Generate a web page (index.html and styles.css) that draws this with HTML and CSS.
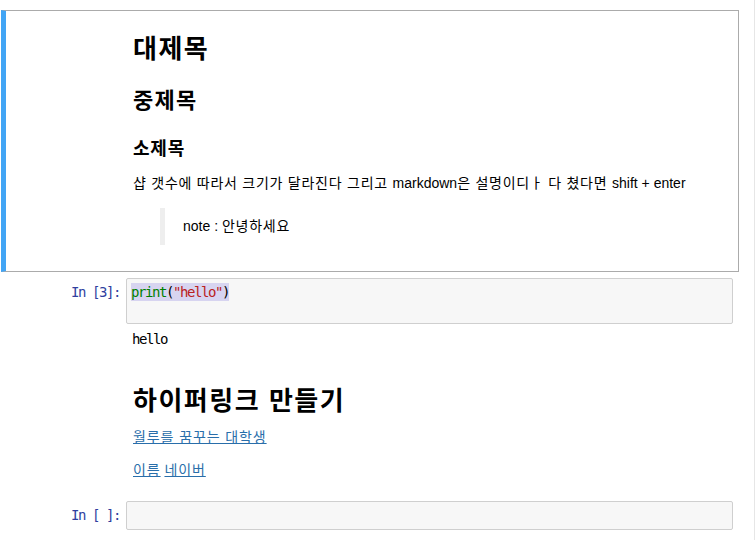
FILE: index.html
```html
<!DOCTYPE html>
<html lang="ko">
<head>
<meta charset="utf-8">
<title>Notebook</title>
<link rel="stylesheet" href="styles.css">
</head>
<body>
<div class="notebook">
  <div class="cell text-cell selected">
    <div class="prompt"></div>
    <div class="render">
      <h1 class="h-first">대제목</h1>
      <h2>중제목</h2>
      <h3>소제목</h3>
      <p class="desc"><span class="ko">샵 갯수에 따라서 크기가 달라진다 그리고 </span>markdown<span class="ko">은 설명이디ㅏ 다 쳤다면 </span>shift + enter</p>
      <blockquote><p>note : <span class="ko">안녕하세요</span></p></blockquote>
    </div>
  </div>

  <div class="cell code-cell">
    <div class="row">
      <div class="prompt in">In [3]:</div>
      <div class="input-area tall"><pre class="code"><span class="hl"><span class="kw">print</span>(<span class="str">"hello"</span>)</span></pre></div>
    </div>
    <div class="row">
      <div class="prompt"></div>
      <div class="output"><pre class="code">hello</pre></div>
    </div>
  </div>

  <div class="cell text-cell">
    <div class="prompt"></div>
    <div class="render">
      <h1 class="h-link">하이퍼링크 만들기</h1>
      <p><a href="#">월루를 꿈꾸는 대학생</a></p>
      <p class="last"><a href="#">이름</a> <a href="#">네이버</a></p>
    </div>
  </div>

  <div class="cell code-cell empty">
    <div class="row">
      <div class="prompt in">In [ ]:</div>
      <div class="input-area short"><pre class="code"> </pre></div>
    </div>
  </div>
</div>
</body>
</html>
```

FILE: styles.css
```css
html, body {
  margin: 0;
  padding: 0;
  background: #fff;
}

body {
  font-family: "Liberation Sans", "Noto Sans CJK KR", sans-serif;
  color: #000;
  font-size: 14px;
}

.notebook {
  width: 755px;
  height: 540px;
  box-sizing: border-box;
  padding: 10px 15px 0 1px;
  border-right: 1px solid #e6e6e6;
  overflow: hidden;
}

.cell {
  display: flex;
  flex-direction: column;
  border: 1px solid transparent;
  border-left: 5px solid transparent;
  padding: 5px 5px 5px 1px;
}

.text-cell {
  flex-direction: row;
}

.cell.selected {
  border-color: #ababab;
  border-left-color: #42a5f5;
}

.row {
  display: flex;
}

.prompt {
  flex: 0 0 119px;
  box-sizing: border-box;
  padding-right: 6px;
  text-align: right;
  font-family: "DejaVu Sans Mono", "Liberation Mono", monospace;
  font-size: 14px;
  letter-spacing: -1.43px;
  line-height: 18px;
  color: #303f9f;
  white-space: pre;
}

.prompt.in {
  padding-top: 5px;
}

.render {
  flex: 1;
  padding: 7px;
  font-family: "Liberation Sans", "Noto Sans CJK KR", sans-serif;
}

h1, h2, h3 {
  font-family: "Noto Sans CJK KR", "Liberation Sans", sans-serif;
  font-weight: bold;
  margin: 0;
}

h1 {
  font-size: 26px;
  line-height: 31px;
  letter-spacing: 1.5px;
}

h1.h-first {
  margin-top: 8px;
}

h1.h-link {
  margin-top: 12px;
  margin-bottom: 13px;
}

h2 {
  font-size: 22px;
  line-height: 26px;
  margin-top: 23px;
  letter-spacing: 1.2px;
}

h3 {
  font-size: 18px;
  line-height: 22px;
  margin-top: 25px;
  letter-spacing: 0.8px;
}

p {
  margin: 0 0 13px 0;
  line-height: 20px;
}

p.desc {
  margin: 15px 0 15px 0;
}

p.last {
  margin-bottom: 0;
}

.ko {
  letter-spacing: 0.75px;
}

blockquote {
  margin: 0 0 14px 27px;
  padding: 8px 0 9px 18px;
  border-left: 5px solid #eeeeee;
}

blockquote p {
  margin: 0;
}

a {
  color: #296eaa;
  text-decoration: underline;
  letter-spacing: 0.9px;
}

.input-area {
  flex: 1;
  border: 1px solid #cfcfcf;
  border-radius: 2px;
  background: #f7f7f7;
  padding: 4px;
}

.input-area.tall {
  min-height: 36px;
}

.input-area.short {
  padding-bottom: 5px;
}

.code {
  margin: 0;
  font-family: "DejaVu Sans Mono", "Liberation Mono", monospace;
  font-size: 14px;
  letter-spacing: -1.43px;
  line-height: 18px;
  color: #000;
}

.hl {
  background: #d7d4f0;
  padding: 1px 0;
}

.kw {
  color: #008000;
}

.str {
  color: #ba2121;
}

.output {
  flex: 1;
  padding: 6px 6px 4px 6px;
}

.code-cell.empty {
  padding-top: 7px;
}
```
